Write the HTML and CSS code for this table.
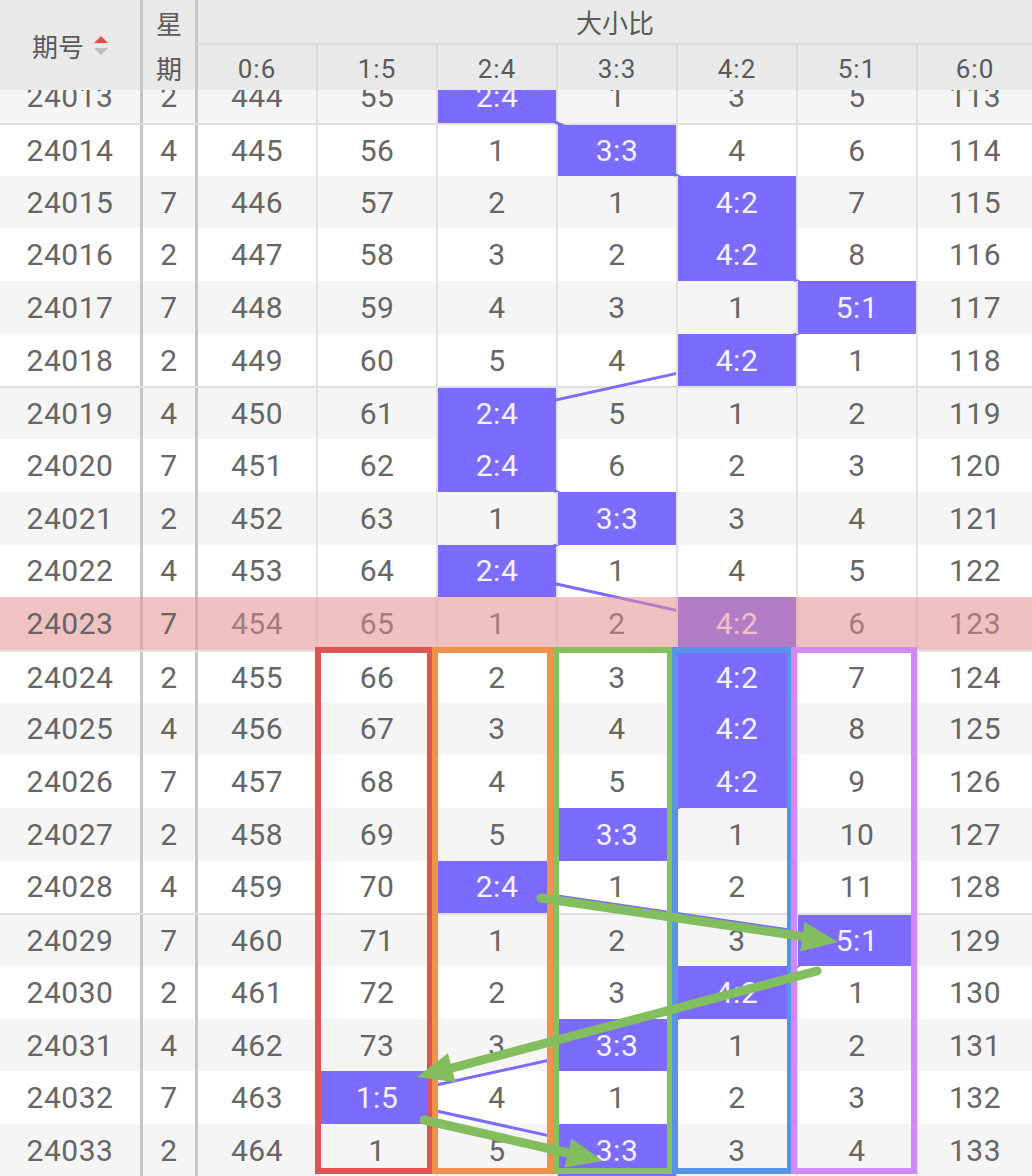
FILE: index.html
```html
<!DOCTYPE html>
<html lang="zh">
<head>
<meta charset="utf-8">
<title>大小比走势</title>
<link rel="stylesheet" href="styles.css">
</head>
<body>
<div class="page">
  <div class="thead">
    <div class="h h-id"><span>期号</span>
      <svg class="sort" width="14" height="20" viewBox="0 0 14 20"><polygon points="7,0 14,7 0,7" fill="#f24a4a"/><polygon points="0,12 14,12 7,19" fill="#bdbdbd"/></svg>
    </div>
    <div class="h h-wk"><span>星</span><span>期</span></div>
    <div class="h h-grp">大小比</div>
    <div class="h h-r first">0:6</div>
    <div class="h h-r">1:5</div>
    <div class="h h-r">2:4</div>
    <div class="h h-r">3:3</div>
    <div class="h h-r">4:2</div>
    <div class="h h-r">5:1</div>
    <div class="h h-r">6:0</div>
  </div>

  <div class="tbody">
    <div class="row g"><div class="c">24013</div><div class="c">2</div><div class="c">444</div><div class="c">55</div><div class="c hit">2:4</div><div class="c">1</div><div class="c">3</div><div class="c">5</div><div class="c">113</div></div>
    <div class="row sep"><div class="c">24014</div><div class="c">4</div><div class="c">445</div><div class="c">56</div><div class="c">1</div><div class="c hit">3:3</div><div class="c">4</div><div class="c">6</div><div class="c">114</div></div>
    <div class="row g"><div class="c">24015</div><div class="c">7</div><div class="c">446</div><div class="c">57</div><div class="c">2</div><div class="c">1</div><div class="c hit">4:2</div><div class="c">7</div><div class="c">115</div></div>
    <div class="row"><div class="c">24016</div><div class="c">2</div><div class="c">447</div><div class="c">58</div><div class="c">3</div><div class="c">2</div><div class="c hit">4:2</div><div class="c">8</div><div class="c">116</div></div>
    <div class="row g"><div class="c">24017</div><div class="c">7</div><div class="c">448</div><div class="c">59</div><div class="c">4</div><div class="c">3</div><div class="c">1</div><div class="c hit">5:1</div><div class="c">117</div></div>
    <div class="row"><div class="c">24018</div><div class="c">2</div><div class="c">449</div><div class="c">60</div><div class="c">5</div><div class="c">4</div><div class="c hit">4:2</div><div class="c">1</div><div class="c">118</div></div>
    <div class="row g sep"><div class="c">24019</div><div class="c">4</div><div class="c">450</div><div class="c">61</div><div class="c hit">2:4</div><div class="c">5</div><div class="c">1</div><div class="c">2</div><div class="c">119</div></div>
    <div class="row"><div class="c">24020</div><div class="c">7</div><div class="c">451</div><div class="c">62</div><div class="c hit">2:4</div><div class="c">6</div><div class="c">2</div><div class="c">3</div><div class="c">120</div></div>
    <div class="row g"><div class="c">24021</div><div class="c">2</div><div class="c">452</div><div class="c">63</div><div class="c">1</div><div class="c hit">3:3</div><div class="c">3</div><div class="c">4</div><div class="c">121</div></div>
    <div class="row"><div class="c">24022</div><div class="c">4</div><div class="c">453</div><div class="c">64</div><div class="c hit">2:4</div><div class="c">1</div><div class="c">4</div><div class="c">5</div><div class="c">122</div></div>
    <div class="row g pink"><div class="c">24023</div><div class="c">7</div><div class="c">454</div><div class="c">65</div><div class="c">1</div><div class="c">2</div><div class="c hit">4:2</div><div class="c">6</div><div class="c">123</div></div>
    <div class="row sep"><div class="c">24024</div><div class="c">2</div><div class="c">455</div><div class="c">66</div><div class="c">2</div><div class="c">3</div><div class="c hit">4:2</div><div class="c">7</div><div class="c">124</div></div>
    <div class="row g"><div class="c">24025</div><div class="c">4</div><div class="c">456</div><div class="c">67</div><div class="c">3</div><div class="c">4</div><div class="c hit">4:2</div><div class="c">8</div><div class="c">125</div></div>
    <div class="row"><div class="c">24026</div><div class="c">7</div><div class="c">457</div><div class="c">68</div><div class="c">4</div><div class="c">5</div><div class="c hit">4:2</div><div class="c">9</div><div class="c">126</div></div>
    <div class="row g"><div class="c">24027</div><div class="c">2</div><div class="c">458</div><div class="c">69</div><div class="c">5</div><div class="c hit">3:3</div><div class="c">1</div><div class="c">10</div><div class="c">127</div></div>
    <div class="row"><div class="c">24028</div><div class="c">4</div><div class="c">459</div><div class="c">70</div><div class="c hit">2:4</div><div class="c">1</div><div class="c">2</div><div class="c">11</div><div class="c">128</div></div>
    <div class="row g sep"><div class="c">24029</div><div class="c">7</div><div class="c">460</div><div class="c">71</div><div class="c">1</div><div class="c">2</div><div class="c">3</div><div class="c hit">5:1</div><div class="c">129</div></div>
    <div class="row"><div class="c">24030</div><div class="c">2</div><div class="c">461</div><div class="c">72</div><div class="c">2</div><div class="c">3</div><div class="c hit">4:2</div><div class="c">1</div><div class="c">130</div></div>
    <div class="row g"><div class="c">24031</div><div class="c">4</div><div class="c">462</div><div class="c">73</div><div class="c">3</div><div class="c hit">3:3</div><div class="c">1</div><div class="c">2</div><div class="c">131</div></div>
    <div class="row"><div class="c">24032</div><div class="c">7</div><div class="c">463</div><div class="c hit">1:5</div><div class="c">4</div><div class="c">1</div><div class="c">2</div><div class="c">3</div><div class="c">132</div></div>
    <div class="row g"><div class="c">24033</div><div class="c">2</div><div class="c">464</div><div class="c">1</div><div class="c">5</div><div class="c hit">3:3</div><div class="c">3</div><div class="c">4</div><div class="c">133</div></div>
  </div>

  <svg class="trend" width="1032" height="1176" viewBox="0 0 1032 1176">
    <polyline fill="none" stroke="#7b6bff" stroke-width="3" points="497,96.65 617,149.35 737,202.05 737,254.75 857,307.45 737,360.15 497,412.85 497,465.55 617,518.25 497,570.95 737,623.65 737,676.35 737,729.05 737,781.75 617,834.45 497,887.15 857,939.85 737,992.55 617,1045.25 377,1097.95 617,1150.65"/>
  </svg>

  <div class="shade"></div>

  <div class="box b-red"></div>
  <div class="box b-orange"></div>
  <div class="box b-green"></div>
  <div class="box b-blue"></div>
  <div class="box b-violet"></div>

  <svg class="arrows" width="1032" height="1176" viewBox="0 0 1032 1176">
    <g stroke="#82bd5e" stroke-width="9" stroke-linecap="round" fill="none">
      <line x1="541" y1="898" x2="806" y2="937"/>
      <line x1="817" y1="971" x2="452" y2="1068"/>
      <line x1="424" y1="1120" x2="568" y2="1153"/>
    </g>
    <g fill="#82bd5e">
      <polygon points="838,942 800.2,951.5 804.6,921.9"/>
      <polygon points="417,1077 448,1053.3 455.6,1082.3"/>
      <polygon points="603,1161 564.6,1167.6 571.4,1138.4"/>
    </g>
  </svg>
</div>
</body>
</html>
```

FILE: styles.css
```css
body {
  margin: 0;
  background: #fff;
}

.page {
  position: relative;
  z-index: 0;
  width: 1032px;
  height: 1176px;
  overflow: hidden;
  background: #fff;
  font-family: Roboto, "Noto Sans CJK SC", sans-serif;
  color: #666;
}

/* ---------- header ---------- */
.thead {
  position: relative;
  z-index: 10;
  display: grid;
  grid-template-columns: 140px 55px 121px repeat(5, 120px) 116px;
  grid-template-rows: 43px 47px;
  background: #e9e9e9;
  color: #5a5a5a;
}

.h {
  display: flex;
  align-items: center;
  justify-content: center;
  font-size: 26px;
  box-sizing: border-box;
}

.h-id {
  grid-column: 1;
  grid-row: 1 / 3;
  gap: 10px;
  font-family: "Noto Sans CJK SC", sans-serif;
}

.sort {
  display: block;
  margin-top: 2px;
}

.h-wk {
  grid-column: 2;
  grid-row: 1 / 3;
  flex-direction: column;
  border-left: 3px solid #c6c6c6;
  font-family: "Noto Sans CJK SC", sans-serif;
}

.h-wk span {
  line-height: 45px;
}

.h-grp {
  grid-column: 3 / 10;
  grid-row: 1;
  border-left: 3px solid #c6c6c6;
  font-family: "Noto Sans CJK SC", sans-serif;
}

.h-r {
  grid-row: 2;
  border-top: 2px solid #dcdcdc;
  border-left: 2px solid #dcdcdc;
  letter-spacing: 1px;
  padding-top: 2px;
}

.h-r.first {
  border-left: 3px solid #c6c6c6;
}

/* ---------- body ---------- */
.tbody {
  margin-top: -19.7px;
}

.row {
  display: grid;
  grid-template-columns: 140px 55px 121px repeat(5, 120px) 116px;
  height: 52.7px;
  box-sizing: border-box;
  background: #fff;
  font-size: 30px;
  letter-spacing: 0.5px;
}

.row.g {
  background: #f5f5f5;
}

.row.sep {
  border-top: 2px solid #e0e0e0;
}

.c {
  display: flex;
  align-items: center;
  justify-content: center;
  border-left: 2px solid #e2e2e2;
}

.c:first-child {
  border-left: 0;
}

.c:nth-child(2),
.c:nth-child(3) {
  border-left: 3px solid #c6c6c6;
}

.hit {
  position: relative;
  z-index: 2;
  background: #7b6bff;
  color: #f4f2ff;
}

.row.pink .c:nth-child(-n+2) {
  background: #f0c2c2;
  color: #666;
}

.row.pink .c:nth-child(2),
.row.pink .c:nth-child(3) {
  border-left-color: #d8aaaa;
}

/* ---------- overlays ---------- */
.trend {
  position: absolute;
  left: 0;
  top: 0;
  z-index: 1;
}

.shade {
  position: absolute;
  left: 198px;
  top: 597.3px;
  width: 834px;
  height: 52.7px;
  z-index: 3;
  background: rgba(235, 142, 142, 0.5);
}

.box {
  position: absolute;
  top: 647px;
  height: 527px;
  box-sizing: border-box;
  border: 6px solid;
  z-index: 4;
}

.b-red { left: 315px; width: 118px; border-color: #dc5656; }
.b-orange { left: 432px; width: 121px; border-color: #f0924a; }
.b-green { left: 553px; width: 120px; border-color: #88c05e; }
.b-blue { left: 672px; width: 121px; border-color: #5594e6; }
.b-violet { left: 791px; width: 126px; border-color: #d08af6; }

.arrows {
  position: absolute;
  left: 0;
  top: 0;
  z-index: 5;
}
```
